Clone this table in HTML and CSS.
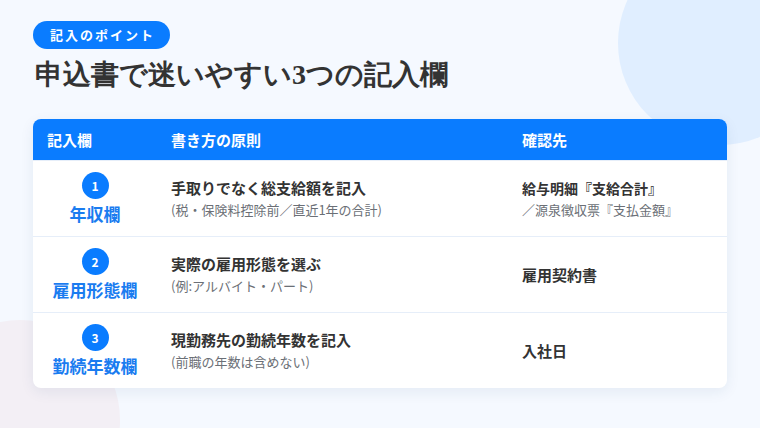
FILE: index.html
```html
<!DOCTYPE html>
<html lang="ja">
<head>
<meta charset="UTF-8">
<meta name="viewport" content="width=device-width, initial-scale=1.0">
<title>申込書で迷いやすい3つの記入欄</title>
<link rel="stylesheet" href="styles.css">
</head>
<body>
<div class="frame">
<div class="bg-circle top"></div>
<div class="bg-circle bottom"></div>
<div class="page">
<span class="badge">記入のポイント</span>
<h1>申込書で迷いやすい3つの記入欄</h1>
<div class="card">
<div class="row head">
<div class="cell">記入欄</div>
<div class="cell">書き方の原則</div>
<div class="cell">確認先</div>
</div>
<div class="row">
<div class="cell field"><span class="num">1</span><span class="label">年収欄</span></div>
<div class="cell"><p class="main">手取りでなく総支給額を記入</p><p class="sub">(税・保険料控除前／直近1年の合計)</p></div>
<div class="cell"><p class="main small">給与明細『支給合計』</p><p class="sub">／源泉徴収票『支払金額』</p></div>
</div>
<div class="row">
<div class="cell field"><span class="num">2</span><span class="label">雇用形態欄</span></div>
<div class="cell"><p class="main">実際の雇用形態を選ぶ</p><p class="sub">(例:アルバイト・パート)</p></div>
<div class="cell"><p class="main">雇用契約書</p></div>
</div>
<div class="row">
<div class="cell field"><span class="num">3</span><span class="label">勤続年数欄</span></div>
<div class="cell"><p class="main">現勤務先の勤続年数を記入</p><p class="sub">(前職の年数は含めない)</p></div>
<div class="cell"><p class="main">入社日</p></div>
</div>
</div>
</div>
</div>
</body>
</html>
```

FILE: styles.css
```css
body {
    font-family: "Noto Sans CJK JP", "Noto Sans", sans-serif;
    background-color: #f5f9ff;
    color: #333;
    margin: 0;
    padding: 0;
}
.frame {
    position: relative;
    width: 760px;
    height: 428px;
    overflow: hidden;
}
.bg-circle {
    position: absolute;
    border-radius: 50%;
}
.bg-circle.top {
    left: 618px;
    top: -59px;
    width: 204px;
    height: 204px;
    background-color: #e0eeff;
}
.bg-circle.bottom {
    left: -80px;
    top: 320px;
    width: 200px;
    height: 200px;
    background-color: #f3eff5;
}
.page {
    position: relative;
    padding: 21px 33px 0;
}
.badge {
    display: inline-block;
    height: 28px;
    line-height: 28px;
    padding: 0 15px 0 17px;
    border-radius: 14px;
    background-color: #0a7cff;
    color: #fff;
    font-size: 13px;
    font-weight: bold;
    letter-spacing: 2px;
}
h1 {
    margin: 8px 0 0 2px;
    font-family: "Liberation Serif", serif;
    font-size: 28px;
    line-height: 36px;
    font-weight: bold;
    color: #333;
}
.card {
    margin-top: 26px;
    background-color: #fff;
    border-radius: 8px;
    overflow: hidden;
    box-shadow: 0 4px 14px rgba(30, 60, 110, 0.08);
}
.row {
    display: grid;
    grid-template-columns: 124px 1fr 219px;
    box-sizing: border-box;
    height: 76px;
    border-top: 1px solid #e6eef9;
}
.row.head {
    height: 41px;
    border-top: none;
    background-color: #0a7cff;
    color: #fff;
    font-size: 15px;
    font-weight: bold;
}
.cell {
    display: flex;
    flex-direction: column;
    justify-content: center;
    padding: 0 14px;
}
.cell.field {
    align-items: center;
    padding: 0;
}
.num {
    width: 27px;
    height: 27px;
    line-height: 27px;
    border-radius: 50%;
    background-color: #0a7cff;
    color: #fff;
    font-size: 12px;
    font-weight: bold;
    text-align: center;
}
.label {
    margin-top: 4px;
    font-size: 17px;
    font-weight: bold;
    color: #1a7cf0;
    line-height: 22px;
}
.main {
    margin: 0;
    font-size: 15px;
    font-weight: bold;
    line-height: 20px;
    color: #333;
}
.main.small {
    font-size: 14px;
}
.sub {
    margin: 3px 0 0;
    font-size: 13px;
    line-height: 18px;
    color: #6b6f76;
}
```
